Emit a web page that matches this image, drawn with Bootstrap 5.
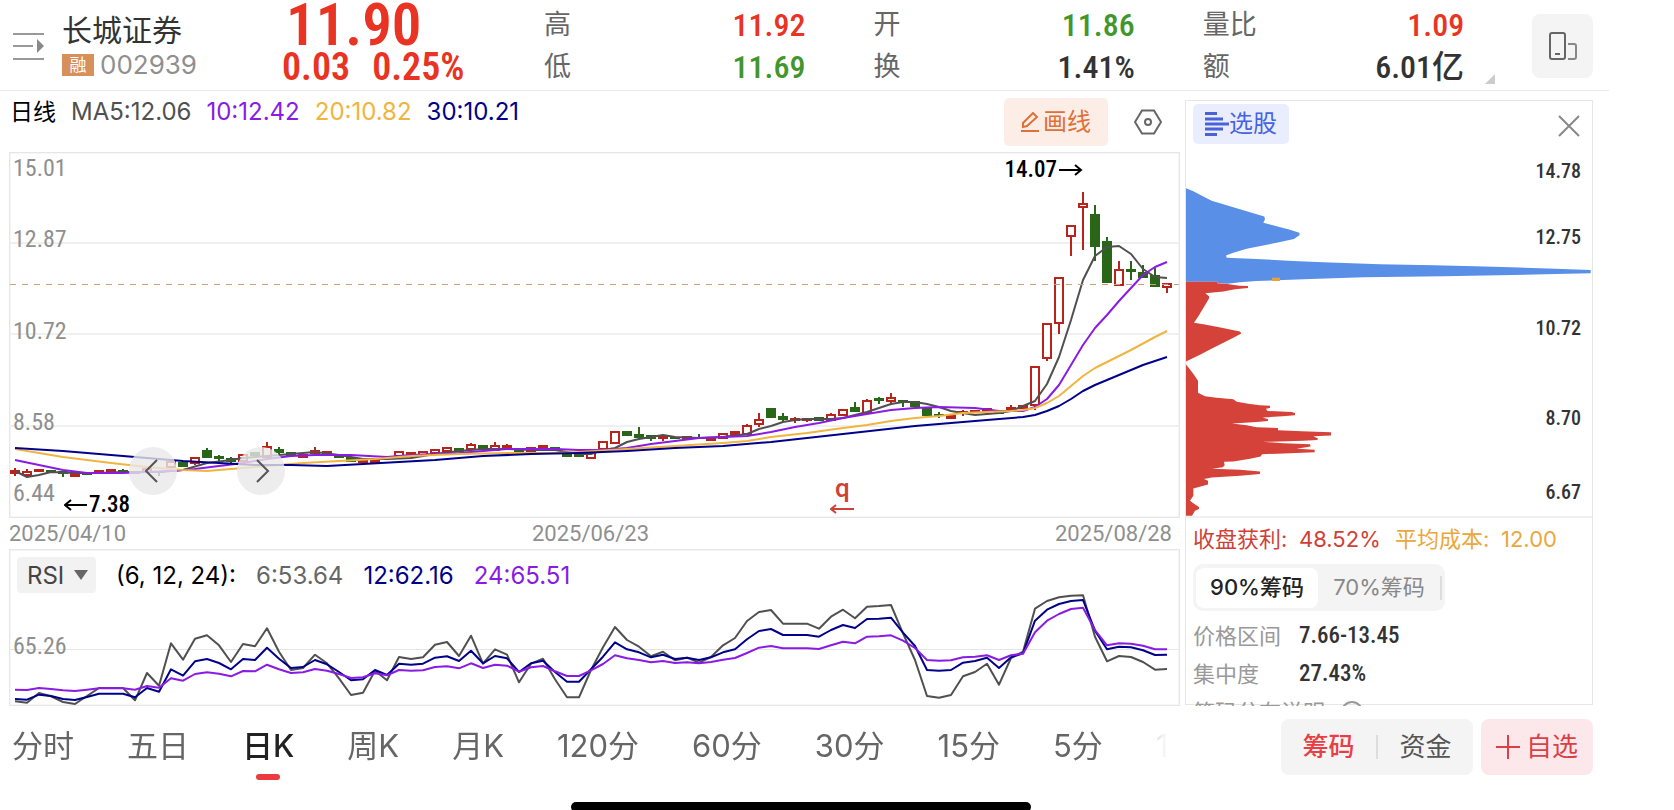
<!DOCTYPE html>
<html lang="zh-CN">
<head>
<meta charset="utf-8">
<meta name="viewport" content="width=device-width, initial-scale=1">
<title>长城证券 002939</title>
<link href="https://cdn.jsdelivr.net/npm/bootstrap@5.3.0/dist/css/bootstrap.min.css" rel="stylesheet">
<style>
:root{--up:#e93323;--down:#43962b;--line:#e6e6e6;--ma5:#505050;--ma10:#8a1be4;--ma20:#f0b440;--ma30:#00008b}
body{font-family:Inter,"Noto Sans CJK SC",sans-serif;color:#333;background:#fff;line-height:1.2;overflow:hidden}
.num{font-family:"Roboto Condensed","Liberation Sans Narrow",Roboto,"Noto Sans CJK SC",sans-serif}
.din{font-family:Roboto,"Noto Sans CJK SC",sans-serif}
button{border:0;padding:0;background:none}
svg{display:block;flex:none}
.screen{padding-right:65px}
.quote-head{height:91px;border-bottom:1px solid #ebebeb}
.head-id{flex:0 0 282px;padding:13px 0 0 13px;gap:17px}
.head-price{flex:0 0 262px;padding-top:4px;color:var(--up);font-weight:600}
.price-now{height:43px;font-size:59px;line-height:42px;padding-left:4px}
.price-chg{font-size:38px;line-height:40px;gap:22px}
.list-icon{margin-top:17px}
.stock-name{font-size:30px;line-height:34px}
.tag-r{background:#d8905a;color:#fff;font-size:17px;line-height:22px;width:32px;text-align:center}
.id-line{gap:6px}
.code{font-size:26px;line-height:28px;color:#8f8f8f}
.stat-line{font-size:27px;line-height:42px;padding-right:68px}
.stat-line dt{font-weight:400;color:#666}
.stat-line dd{font-size:32px;font-weight:500;margin:0}
.corner{right:114px;top:74px;border:5px solid #ccc;border-top-color:transparent;border-left-color:transparent}
.tile{width:64px;height:64px;margin:14px 16px 0 0;background:#f4f4f4;border-radius:8px}
.chart-col{padding-left:9px;min-width:0}
.tools{height:61px}
.legend{font-size:24px;line-height:26px;gap:15px;padding:8px 0 0 1px}
.legend-name{font-size:23px}
.draw-btn{width:104px;height:48px;background:#fceee7;color:#df7038;border-radius:5px;font-size:24px;margin-top:7px}
.gear{margin:18px 18px 0 26px}
.plot{border:1px solid var(--line);box-shadow:inset 0 0 0 1px #f6f6f6}
.plot-k{height:366px}
.plot-rsi{height:157px}
.plot svg.fill,.chips svg.fill{width:100%;height:100%}
.axis{inset:0 auto 0 3px;display:grid;grid-template-rows:71fr 92fr 91fr 71fr 24px;padding:3px 0 12px;font-size:24px;line-height:24px;color:#8f8f8f}
.note{font-size:23px;line-height:24px;font-weight:500;color:#000;gap:2px}
.note-hi{right:96px;top:5px}
.note-lo{left:54px;top:340px}
.note-q{left:70%;bottom:3px;color:#cf4138;font-size:26px;padding-left:2px}
.pager{top:294px;width:48px;height:48px;border-radius:50%;background:rgba(232,232,232,.8)}
.pager-prev{left:119px}
.pager-next{left:227px}
.dates{height:31px;font-size:22px;line-height:31px;color:#8f8f8f;padding-right:8px}
.rsi-head{left:7px;top:7px;gap:20px;font-size:24px;line-height:38px}
.pick{width:79px;height:36px}
.pick select{width:79px;height:36px;border:0;border-radius:4px;background:#f2f2f2;color:#444;appearance:none;padding:1px 0 0 10px;font-size:24px;line-height:35px}
.pick::after{content:"";position:absolute;right:8px;top:13px;border:7px solid transparent;border-top:10px solid #666;border-bottom:0;pointer-events:none}
.rsi-tag{left:3px;top:84px;font-size:24px;line-height:24px;color:#8f8f8f}
.side{flex:0 0 408px;margin:9px 16px 0 5px;height:605px;border:1px solid var(--line)}
.side-head{height:51px;padding:3px 12px 0 7px}
.pick-btn{width:96px;height:40px;background:#eaedfd;color:#4663e0;border-radius:5px;font-size:24px}
.close-btn{height:44px}
.chips{height:366px;border-bottom:2px solid #f0f0f0}
.chips .axis{inset:0 11px 0 auto;grid-template-rows:66fr 91fr 91fr 74fr 24px;padding:7px 0 12px;font-size:20px;font-weight:500;color:#333;text-align:right}
.facts{height:188px;overflow:hidden;padding-left:7px;font-size:22px}
.cost{line-height:26px;padding-top:8px;white-space:nowrap}
.seg{width:252px;height:47px;border-radius:10px;background:#f4f4f4;margin-top:12px;padding:3px}
.seg button{width:122px;height:40px;border-radius:8px;color:#888}
.seg .on{background:#fff;color:#222;font-weight:500}
.fact-list{padding-top:6px}
.fact-row{line-height:38px}
.fact-row dt{width:106px;font-weight:400;color:#999}
.fact-row dd{margin:0;font-size:23px;font-weight:500;color:#333}
.foot{height:96px}
.tabs{gap:53px;padding-left:12px;font-size:31px;line-height:44px;overflow:hidden;margin-top:18px;height:56px;color:#666;white-space:nowrap;-webkit-mask-image:linear-gradient(90deg,#000 95%,transparent);mask-image:linear-gradient(90deg,#000 95%,transparent)}
.tabs a{color:inherit;text-decoration:none;position:relative}
.tabs .on{color:#222;font-weight:500}
.tabs .on::after{content:"";position:absolute;left:50%;bottom:0;width:24px;height:6px;margin-left:-12px;border-radius:3px;background:#eb3b40}
.foot-btns{gap:8px;margin:13px 16px 0 113px;font-size:26px}
.foot-seg{width:192px;height:56px;border-radius:8px;background:#f4f4f4;color:#555}
.foot-seg .on{color:#e83f44;font-weight:500}
.vr-s{width:2px;height:24px;background:#ddd}
.add-btn{width:112px;height:56px;border-radius:8px;background:#fce8ea;color:#da4046;gap:6px}
.home-row{padding-right:8px}
.home-bar{width:460px;height:10px;border-radius:5px;background:#000}
</style>
</head>
<body>
<div class="screen">
<header class="quote-head d-flex position-relative">
  <div class="head-id d-flex">
    <svg class="list-icon" width="32" height="32" viewBox="0 0 32 32"><path d="M0 4h31M0 16h20M0 29h31" stroke="#999" stroke-width="2"/><path d="M24 9v14l7-7z" fill="#888"/></svg>
    <div>
      <div class="stock-name">长城证券</div>
      <div class="id-line d-flex align-items-center mt-1"><span class="tag-r">融</span><span class="code">002939</span></div>
    </div>
  </div>
  <div class="head-price num">
    <div class="price-now">11.90</div>
    <div class="price-chg d-flex"><span>0.03</span><span>0.25%</span></div>
  </div>
  <div class="flex-fill row row-cols-3 g-0 align-content-start pt-1">
    <dl class="col stat-line d-flex justify-content-between m-0"><dt>高</dt><dd class="num" style="color:var(--up)">11.92</dd></dl>
    <dl class="col stat-line d-flex justify-content-between m-0"><dt>开</dt><dd class="num" style="color:var(--down)">11.86</dd></dl>
    <dl class="col stat-line d-flex justify-content-between m-0"><dt>量比</dt><dd class="num" style="color:var(--up)">1.09</dd></dl>
    <dl class="col stat-line d-flex justify-content-between m-0"><dt>低</dt><dd class="num" style="color:var(--down)">11.69</dd></dl>
    <dl class="col stat-line d-flex justify-content-between m-0"><dt>换</dt><dd class="num">1.41%</dd></dl>
    <dl class="col stat-line d-flex justify-content-between m-0"><dt>额</dt><dd class="num">6.01亿</dd></dl>
  </div>
  <span class="corner position-absolute"></span>
  <button class="tile d-flex align-items-center justify-content-center" aria-label="切换竖屏">
    <svg width="28" height="30" viewBox="0 0 28 30" fill="none" stroke-width="2"><rect x="1" y="2" width="15" height="26" rx="2" stroke="#666"/><path d="M6 23h5" stroke="#666"/><path d="M19 13h6q2 0 2 2v11q0 2-2 2h-6" stroke="#888"/></svg>
  </button>
</header>

<main class="d-flex">
  <section class="chart-col flex-fill">
    <div class="tools d-flex">
      <div class="legend d-flex flex-fill"><span class="legend-name text-black">日线</span><span style="color:var(--ma5)">MA5:12.06</span><span style="color:var(--ma10)">10:12.42</span><span style="color:var(--ma20)">20:10.82</span><span style="color:var(--ma30)">30:10.21</span></div>
      <button class="draw-btn d-flex align-items-center justify-content-center gap-1"><svg width="18" height="20" viewBox="0 0 18 20" fill="none" stroke="currentColor" stroke-width="2"><path d="M0 19h18M2 15v-4L12 1l4 4L6 14z"/></svg>画线</button>
      <button class="gear align-self-start" aria-label="设置"><svg width="28" height="26" viewBox="0 0 28 26" fill="none" stroke="#666" stroke-width="2"><path d="M8 1.500h12L27 13l-7 11.500H8L1 13z"/><circle cx="14" cy="13" r="3"/></svg></button>
    </div>
    <div class="plot plot-k position-relative">
      <svg class="fill" id="kline" viewBox="10 153 1169 364" preserveAspectRatio="none"></svg>
      <div class="axis num position-absolute"><span>15.01</span><span>12.87</span><span>10.72</span><span>8.58</span><span>6.44</span></div>
      <div class="note note-hi num position-absolute d-flex align-items-center">14.07<svg width="24" height="12" viewBox="0 0 24 12" fill="none" stroke="#000" stroke-width="2"><path d="M0 6h22M16 1l6 5-6 5"/></svg></div>
      <div class="note note-lo num position-absolute d-flex align-items-center"><svg width="23" height="12" viewBox="0 0 23 12" fill="none" stroke="#000" stroke-width="2"><path d="M23 6H1M7 1L1 6l6 5"/></svg>7.38</div>
      <div class="note note-q din position-absolute text-center">q<svg class="mt-1" width="24" height="10" viewBox="0 0 24 10" fill="none" stroke="#cf4138" stroke-width="2"><path d="M24 5H1M6 1L1 5l5 4"/></svg></div>
      <button class="pager pager-prev position-absolute" aria-label="上一个"><svg class="mx-auto" width="18" height="24" viewBox="0 0 18 24" fill="none" stroke="#555" stroke-width="2"><path d="M13 1L2 12l11 11"/></svg></button>
      <button class="pager pager-next position-absolute" aria-label="下一个"><svg class="mx-auto" width="18" height="24" viewBox="0 0 18 24" fill="none" stroke="#555" stroke-width="2"><path d="M5 1l11 11L5 23"/></svg></button>
    </div>
    <div class="dates din d-flex justify-content-between"><span>2025/04/10</span><span>2025/06/23</span><span>2025/08/28</span></div>
    <div class="plot plot-rsi position-relative">
      <svg class="fill" id="rsi" viewBox="10 550 1169 155" preserveAspectRatio="none"></svg>
      <div class="rsi-head position-absolute d-flex">
        <label class="pick position-relative" aria-label="指标"><select><option>RSI</option></select></label>
        <span class="text-black">(6, 12, 24):</span><span style="color:#666">6:53.64</span><span style="color:var(--ma30)">12:62.16</span><span style="color:var(--ma10)">24:65.51</span>
      </div>
      <div class="rsi-tag num position-absolute">65.26</div>
    </div>
  </section>

  <aside class="side">
    <div class="side-head d-flex justify-content-between">
      <button class="pick-btn d-flex align-items-center justify-content-center"><svg width="24" height="24" viewBox="0 0 24 24"><path d="M0 1.500h12M0 7h18M0 12h24M0 17h18M0 22.500h12" stroke="#4a62d8" stroke-width="3"/></svg>选股</button>
      <button class="close-btn" aria-label="关闭"><svg width="22" height="22" viewBox="0 0 22 22" stroke="#888" stroke-width="2"><path d="M1 1l20 20M21 1L1 21"/></svg></button>
    </div>
    <div class="chips position-relative">
      <svg class="fill" viewBox="18 6 1218 1095" preserveAspectRatio="none">
        <path fill="#5a8fe8" d="M18 115L40 124 70 140 95 153 160 172 200 184 253 200 255 208 250 219 290 229 330 240 358 249 359 256 342 268 290 279 200 297 160 309 138 317 140 324 230 328 340 334 430 338 600 344 760 347 885 350 995 353 1125 357 1232 361V371L1095 374 957 377 790 380 550 383 460 386 370 389 230 394 180 398 142 402 112 400V396H18z"/>
        <path fill="#d5423a" d="M18 396H112V401L142 403 178 408 204 409V415L165 419 130 426 76 431 87 440V447L70 475 55 500 42 520 70 524 110 532 180 546 184 552 160 565 90 600 60 616 18 636z"/>
        <path fill="#d5423a" d="M18 645L30 660 42 676 54 694V730L75 741 110 745 160 750 170 757 210 764 240 768 270 769V776L258 778 262 785 335 788 345 791V798L308 801 248 805 264 810V815L230 818 156 823 200 828 230 834 294 836V843L365 846 453 849V859L400 861 414 868 412 872 370 875 248 878 310 882 390 885 392 892 350 899 404 902V909L330 912 246 915 242 922 210 929 160 937 132 938 134 948 128 954 96 959 180 962 240 967V975L180 980 95 985 72 990 84 995V1006L62 1012 40 1018V1040L30 1055 42 1064 57 1074V1080L45 1085 36 1100H18z"/>
        <path fill="#e5a23c" d="M276 384h24v10h-24z"/>
      </svg>
      <div class="axis num position-absolute"><span>14.78</span><span>12.75</span><span>10.72</span><span>8.70</span><span>6.67</span></div>
    </div>
    <div class="facts">
      <div class="cost d-flex"><span style="color:#cf4138;width:106px">收盘获利:</span><span style="color:#cf4138;width:96px">48.52%</span><span style="color:#e9a73c;width:106px">平均成本:</span><span style="color:#e9a73c">12.00</span></div>
      <div class="seg d-flex align-items-center"><button class="on">90%筹码</button><button>70%筹码</button><span class="vr-s"></span></div>
      <dl class="fact-list mb-0">
        <div class="fact-row d-flex"><dt>价格区间</dt><dd class="num">7.66-13.45</dd></div>
        <div class="fact-row d-flex"><dt>集中度</dt><dd class="num">27.43%</dd></div>
        <div class="fact-row d-flex align-items-center"><dt class="w-auto me-3">筹码分布说明</dt><svg width="22" height="22" viewBox="0 0 22 22" fill="none" stroke="#999" stroke-width="2"><circle cx="11" cy="11" r="10"/></svg></div>
      </dl>
    </div>
  </aside>
</main>

<footer class="foot d-flex">
  <nav class="tabs d-flex flex-fill">
    <a href="#">分时</a><a href="#">五日</a><a href="#" class="on">日K</a><a href="#">周K</a><a href="#">月K</a><a href="#">120分</a><a href="#">60分</a><a href="#">30分</a><a href="#">15分</a><a href="#">5分</a><a href="#">1分</a>
  </nav>
  <div class="foot-btns d-flex">
    <div class="foot-seg d-flex align-items-center justify-content-evenly"><button class="on">筹码</button><span class="vr-s"></span><button style="color:#555">资金</button></div>
    <button class="add-btn d-flex align-items-center justify-content-center"><svg width="24" height="24" viewBox="0 0 24 24" stroke="currentColor" stroke-width="2"><path d="M12 0v24M0 12h24"/></svg>自选</button>
  </div>
</footer>
<div class="home-row"><div class="home-bar mx-auto"></div></div>
</div>
<script src="https://cdn.jsdelivr.net/npm/bootstrap@5.3.0/dist/js/bootstrap.bundle.min.js"></script>
<script>
// One candle per trading day: colour, body top, body bottom, high, low
const candles = `r471 473 468 476|r472 475 469 476|r470 471 469 472|g470 473|g471 474 471 477|r474 476|g473 475|r471 473|r470 472|g470 472 469 472|g471 474|r469 472|g471 473 471 476|r462 467 460 467|g462 467|r458 463 457 465|g450 458 448 458|g456 459 455 461|g458 462 457 463|r455 461|g452 456|r447 457 442 457|g449 453 447 455|g452 456|r455 457 454 458|r451 453 447 455|r452 454|g454 458|g457 462|r460 462|r460 462|g456 458|r452 456|r453 455|r452 455 451 457|r450 453|r448 451|g448 452|r445 449 443 449|g445 450|r446 450 442 450|r446 448 444 448|g448 452|r448 451|r446 448|g447 451|g452 457|g453 457|r453 458|r442 449 441 449|r432 443|g431 436|g434 438 427 438|g435 439 435 441|r437 438 435 441|g437 439|r437 438 436 440|g437 439 434 439|r438 440|r434 438|r432 434 431 435|r426 434 424 434|r420 424 413 427|g408 418|g416 420 413 422|r419 420 417 423|r419 420 418 422|g417 421|r415 420 413 420|r410 415|g407 412 402 412|r401 413 399 413|g398 401 397 404|r398 401 393 405|g400 402 400 407|g401 407|g407 416|g414 416 412 418|r416 418|r412 413 410 416|r411 412|r409 411|g412 414|r408 410 405 411|r406 408 405 409|r367 405 367 410|r324 358 324 361|r278 323 278 334|r226 236 226 256|r204 207 192 250|g214 247 205 261|g241 283 237 283|r270 285 261 285|g269 272 261 280|g272 278 265 278|g275 287 268 287|r284 287 284 293`.split('|');
const X = i => 15 + 12 * i;
const ns = 'vector-effect="non-scaling-stroke"';
const line = (pts, c) => `<polyline points="${pts}" fill="none" stroke="${c}" stroke-width="2" stroke-linejoin="round" ${ns}/>`;
let k = '';
[243, 334, 426].forEach(y => k += `<path d="M10 ${y}H1180" stroke="#f0f0f0" stroke-width="2" ${ns}/>`);
candles.forEach((s, i) => {
  const up = s[0] === 'r', [t, b, h, l] = s.slice(1).split(' ').map(Number), c = up ? '#b8241c' : '#2a6618', x = X(i);
  if (h) k += `<path d="M${x} ${h}V${t}M${x} ${b}V${l}" stroke="${c}" stroke-width="2" ${ns}/>`;
  k += up ? `<rect x="${x - 4}" y="${t}" width="8" height="${b - t}" fill="#fff" stroke="${c}" stroke-width="2" ${ns}/>`
          : `<rect x="${x - 5}" y="${t}" width="10" height="${b - t}" fill="${c}"/>`;
});
k += line('15,471 27,477 39,475 51,472 75,473 99,473 123,472 159,472 183,470 207,463 231,460 243,458 267,456 291,454 315,452 339,455 363,459 387,459 411,458 435,454 459,451 483,449 507,449 531,450 555,450 579,454 591,454 603,450 615,448 627,442 639,439 651,437 663,435 675,437 699,438 723,437 747,434 759,429 771,426 783,422 795,420 807,419 831,419 843,418 855,415 867,412 879,408 891,404 903,402 915,402 927,404 939,407 951,411 963,413 975,415 999,413 1011,411 1023,406 1035,401 1047,384 1059,357 1071,320 1083,280 1095,256 1107,247 1119,246 1131,254 1143,269 1155,277 1167,278', '#505050');
k += line('15,460 39,465 63,470 87,473 123,473 147,472 171,471 195,469 219,466 243,463 267,459 291,456 315,455 351,455 387,457 411,455 435,454 459,453 483,451 507,449 555,449 579,450 603,450 627,448 651,444 675,441 699,438 723,437 747,436 771,432 795,427 819,423 843,418 867,414 891,410 915,408 939,407 975,408 999,411 1023,411 1035,407 1047,399 1059,385 1071,365 1083,345 1095,328 1107,315 1119,301 1131,288 1143,275 1155,267 1167,262', '#8a1be4');
k += line('15,449 63,457 111,463 147,467 183,470 207,471 231,469 267,466 303,463 339,461 375,459 411,456 459,454 507,453 555,453 579,452 627,449 675,446 723,443 747,441 771,437 807,433 843,428 867,425 891,421 915,418 939,416 963,413 987,412 1011,411 1023,410 1035,408 1047,403 1059,396 1071,386 1083,376 1095,368 1107,362 1131,350 1155,337 1167,331', '#f0b440');
k += line('15,448 63,451 111,455 147,458 183,461 219,463 255,465 291,465 327,466 363,464 399,462 435,460 483,456 531,454 579,453 627,451 675,448 723,446 771,442 807,438 843,434 879,430 915,426 951,423 987,420 1023,417 1035,415 1047,411 1059,406 1071,399 1083,391 1095,385 1119,375 1143,365 1167,357', '#00008b');
k += `<path d="M10 284.500H1180" stroke="#c8a27c" stroke-dasharray="6 6" ${ns}/>`;
document.getElementById('kline').innerHTML = k;

// RSI series, in thirds of a chart unit below the top of the scale
const series = [
 ['#505050', [484,488,459,469,486,492,468,444,444,444,481,399,437,310,359,296,286,316,366,312,319,265,335,390,384,344,370,415,465,458,392,421,351,357,352,314,306,348,287,371,328,344,427,371,356,418,472,472,390,322,261,300,320,349,335,361,353,368,351,316,294,243,216,210,251,251,251,266,230,209,235,200,198,195,280,360,468,473,465,409,396,371,434,354,335,206,183,172,167,166,290,364,348,351,366,389,387]],
 ['#00008b', [477,479,464,468,477,480,471,461,461,461,472,444,455,388,407,364,357,369,388,357,360,323,356,384,381,360,373,396,421,418,390,405,371,374,371,353,349,363,332,370,348,355,396,370,362,396,425,425,388,350,307,328,337,352,344,357,353,360,352,337,328,298,273,267,285,285,285,290,270,255,264,237,236,233,278,318,390,392,390,368,363,353,384,352,340,242,209,192,183,180,272,328,320,322,331,345,344]],
 ['#8a1be4', [449,450,444,447,451,453,449,445,445,445,449,438,443,415,422,402,397,401,409,393,394,374,388,399,397,387,392,402,414,412,400,406,390,392,391,381,379,385,370,384,374,377,395,382,378,394,408,408,391,372,346,355,360,367,363,369,367,370,366,359,354,339,323,318,325,325,325,327,316,305,310,290,289,286,302,324,360,362,361,352,350,346,360,346,341,277,242,222,207,203,270,316,310,311,317,328,328]]
];
document.getElementById('rsi').innerHTML = `<path d="M10 649.500H1180" stroke="#e6e6e6" ${ns}/>` +
  series.map(([c, v]) => line(v.map((y, i) => X(i) + ',' + (540 + y / 3).toFixed(1)).join(' '), c)).join('');
</script>
</body>
</html>
